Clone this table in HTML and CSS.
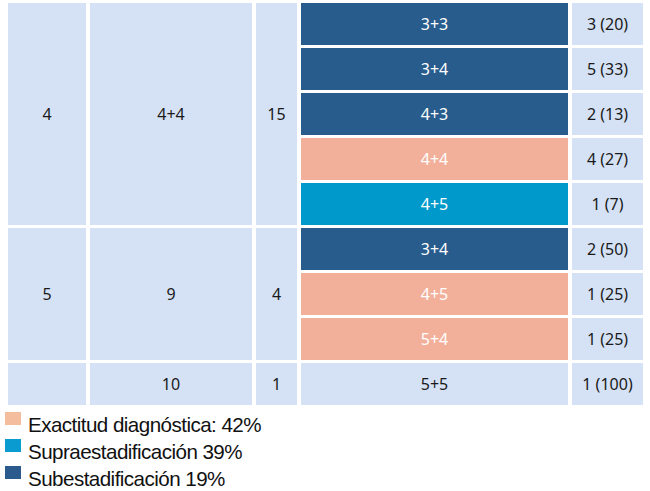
FILE: index.html
```html
<!DOCTYPE html>
<html lang="es">
<head>
<meta charset="utf-8">
<title>Tabla</title>
<link rel="stylesheet" href="styles.css">
</head>
<body>
<div class="grid">
  <div class="cell light c1 g1">4</div>
  <div class="cell light c2 g1">4+4</div>
  <div class="cell light c3 g1">15</div>
  <div class="cell dark c4">3+3</div><div class="cell light c5">3 (20)</div>
  <div class="cell dark c4">3+4</div><div class="cell light c5">5 (33)</div>
  <div class="cell dark c4">4+3</div><div class="cell light c5">2 (13)</div>
  <div class="cell salmon c4">4+4</div><div class="cell light c5">4 (27)</div>
  <div class="cell cyan c4">4+5</div><div class="cell light c5">1 (7)</div>

  <div class="cell light c1 g2">5</div>
  <div class="cell light c2 g2">9</div>
  <div class="cell light c3 g2">4</div>
  <div class="cell dark c4">3+4</div><div class="cell light c5">2 (50)</div>
  <div class="cell salmon c4">4+5</div><div class="cell light c5">1 (25)</div>
  <div class="cell salmon c4">5+4</div><div class="cell light c5">1 (25)</div>

  <div class="cell light c1"></div>
  <div class="cell light c2">10</div>
  <div class="cell light c3">1</div>
  <div class="cell light c4">5+5</div><div class="cell light c5">1 (100)</div>
</div>
<ul class="legend">
  <li><span class="sw sw-salmon"></span>Exactitud diagnóstica: 42%</li>
  <li><span class="sw sw-cyan"></span>Supraestadificación 39%</li>
  <li><span class="sw sw-dark"></span>Subestadificación 19%</li>
</ul>
</body>
</html>
```
FILE: styles.css
```css
html, body {
  margin: 0;
  padding: 0;
  background: #ffffff;
}
.grid {
  display: grid;
  grid-template-columns: 78px 162px 41px 267px 71px;
  grid-auto-rows: 42px;
  column-gap: 4px;
  row-gap: 3px;
  padding: 3px 0 0 8px;
  font-family: "Noto Sans", "Open Sans", sans-serif;
  font-stretch: 75%;
  font-size: 16px;
  color: #1a1a1a;
}
.cell {
  display: flex;
  align-items: center;
  justify-content: center;
}
.c1 { grid-column: 1; }
.c2 { grid-column: 2; }
.c3 { grid-column: 3; }
.c4 { grid-column: 4; }
.c5 { grid-column: 5; }
.g1 { grid-row: span 5; }
.g2 { grid-row: span 3; }
.light { background: #d5e2f5; }
.dark { background: #275c8c; color: #ffffff; }
.salmon { background: #f2b09a; color: #ffffff; }
.cyan { background: #0099cc; color: #ffffff; }
.legend {
  list-style: none;
  margin: 6px 0 0 0;
  padding: 0 0 0 5px;
  font-family: "Liberation Sans", Arial, sans-serif;
  font-size: 20.6px;
  letter-spacing: -0.55px;
  line-height: 27px;
  color: #111111;
}
.legend li {
  display: flex;
  align-items: center;
}
.sw {
  width: 16px;
  height: 13px;
  margin-right: 7px;
  flex: none;
  position: relative;
  top: -6px;
}
.sw-salmon { background: #f4bd9e; }
.sw-cyan { background: #0a9bd1; }
.sw-dark { background: #2b5b8d; }
```
